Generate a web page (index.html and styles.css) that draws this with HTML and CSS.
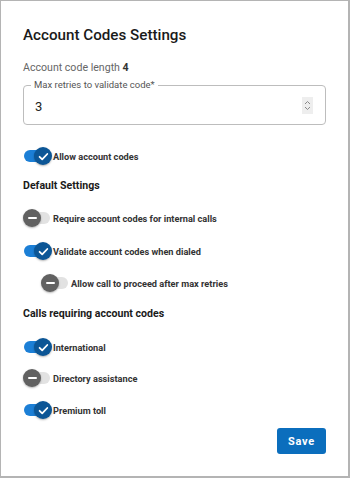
FILE: index.html
```html
<!DOCTYPE html>
<html>
<head>
<meta charset="utf-8">
<link rel="stylesheet" href="styles.css">
</head>
<body>
<div class="panel">
  <h1 class="title">Account Codes Settings</h1>
  <div class="codelen">Account code length <b>4</b></div>
  <div class="field">
    <span class="field-label">Max retries to validate code*</span>
    <span class="field-value">3</span>
    <span class="spin">
      <svg width="11" height="17" viewBox="0 0 11 17"><path d="M3 7 L5.5 4.5 L8 7 M3 10 L5.5 12.5 L8 10" fill="none" stroke="#8a8a8a" stroke-width="1"/></svg>
    </span>
  </div>

  <div class="row r-allow"><span class="tg on"><span class="knob"><svg width="17" height="17" viewBox="0 0 17 17"><path d="M4.6 8.8 L7.2 11.3 L12.3 6" fill="none" stroke="#fff" stroke-width="1.8" stroke-linecap="round" stroke-linejoin="round"/></svg></span></span><span class="lbl">Allow account codes</span></div>

  <div class="section s-default">Default Settings</div>

  <div class="row r-req"><span class="tg off"><span class="knob"><span class="minus"></span></span></span><span class="lbl">Require account codes for internal calls</span></div>

  <div class="row r-val"><span class="tg on"><span class="knob"><svg width="17" height="17" viewBox="0 0 17 17"><path d="M4.6 8.8 L7.2 11.3 L12.3 6" fill="none" stroke="#fff" stroke-width="1.8" stroke-linecap="round" stroke-linejoin="round"/></svg></span></span><span class="lbl">Validate account codes when dialed</span></div>

  <div class="row r-proc indent"><span class="tg off"><span class="knob"><span class="minus"></span></span></span><span class="lbl">Allow call to proceed after max retries</span></div>

  <div class="section s-calls">Calls requiring account codes</div>

  <div class="row r-intl"><span class="tg on"><span class="knob"><svg width="17" height="17" viewBox="0 0 17 17"><path d="M4.6 8.8 L7.2 11.3 L12.3 6" fill="none" stroke="#fff" stroke-width="1.8" stroke-linecap="round" stroke-linejoin="round"/></svg></span></span><span class="lbl">International</span></div>

  <div class="row r-dir"><span class="tg off"><span class="knob"><span class="minus"></span></span></span><span class="lbl">Directory assistance</span></div>

  <div class="row r-prem"><span class="tg on"><span class="knob"><svg width="17" height="17" viewBox="0 0 17 17"><path d="M4.6 8.8 L7.2 11.3 L12.3 6" fill="none" stroke="#fff" stroke-width="1.8" stroke-linecap="round" stroke-linejoin="round"/></svg></span></span><span class="lbl">Premium toll</span></div>

  <div class="actions"><button class="save">Save</button></div>
</div>
</body>
</html>
```
FILE: styles.css
```css
* { box-sizing: border-box; }
html, body { margin: 0; padding: 0; background: #fff; }
body { font-family: Roboto, "Noto Sans", sans-serif; }
.panel {
  width: 350px;
  height: 478px;
  border: 1px solid #b4b4b4;
  border-right-width: 2px;
  border-bottom-width: 2px;
  padding: 24px 22px 0 22px;
  display: flex;
  flex-direction: column;
}
.title {
  margin: 0;
  font-size: 15.2px;
  font-weight: 500;
  line-height: 20px;
  color: #1a1a1a;
}
.codelen {
  margin-top: 15px;
  font-size: 10.6px;
  line-height: 16px;
  color: #666;
}
.codelen b { color: #333; font-weight: 700; }
.field {
  position: relative;
  margin-top: 9px;
  height: 40px;
  border: 1px solid #bdbdbd;
  border-radius: 4px;
  display: flex;
  align-items: center;
  padding: 0 12px 0 11px;
}
.field-label {
  position: absolute;
  left: 7px;
  top: -7px;
  padding: 0 3px;
  background: #fff;
  font-size: 9.5px;
  line-height: 12px;
  color: #555;
}
.field-value {
  flex: 1;
  font-size: 13px;
  color: #222;
  padding-top: 2px;
}
.spin {
  width: 11px;
  height: 17px;
  background: #eeeeee;
  display: flex;
}
.row {
  display: flex;
  align-items: center;
  height: 20px;
}
.indent { padding-left: 18px; }
.tg {
  position: relative;
  width: 26px;
  height: 12px;
  border-radius: 6px;
  flex: none;
  margin-right: 3px;
  margin-left: 1px;
}
.tg.on { background: #1c7fd6; }
.tg.off { background: #e2e2e2; }
.knob {
  position: absolute;
  top: -3px;
  width: 18px;
  height: 18px;
  border-radius: 50%;
  display: flex;
  align-items: center;
  justify-content: center;
  box-shadow: 0 1px 2px rgba(0,0,0,0.3);
}
.tg.on .knob { left: 10px; background: #0c5696; }
.tg.off .knob { left: -1px; background: #616161; }
.minus { width: 9px; height: 2px; background: #fff; border-radius: 1px; }
.lbl {
  font-size: 9.2px;
  font-weight: 700;
  letter-spacing: 0;
  color: #333;
}
.section {
  font-size: 10.6px;
  font-weight: 700;
  line-height: 18px;
  color: #1a1a1a;
}
.r-allow { margin-top: 21px; }
.s-default { margin-top: 11px; }
.r-req { margin-top: 13px; }
.r-val { margin-top: 13px; }
.r-proc { margin-top: 12px; }
.s-calls { margin-top: 12px; }
.r-intl { margin-top: 14px; }
.r-dir { margin-top: 11px; }
.r-prem { margin-top: 12px; }
.actions {
  margin-top: 8px;
  display: flex;
  justify-content: flex-end;
}
.save {
  width: 49px;
  height: 26px;
  border: none;
  border-radius: 3px;
  background: #0b6ebd;
  color: #fff;
  font-family: Roboto, sans-serif;
  font-size: 11px;
  font-weight: 700;
  letter-spacing: 0.8px;
  padding: 0;
}
```
